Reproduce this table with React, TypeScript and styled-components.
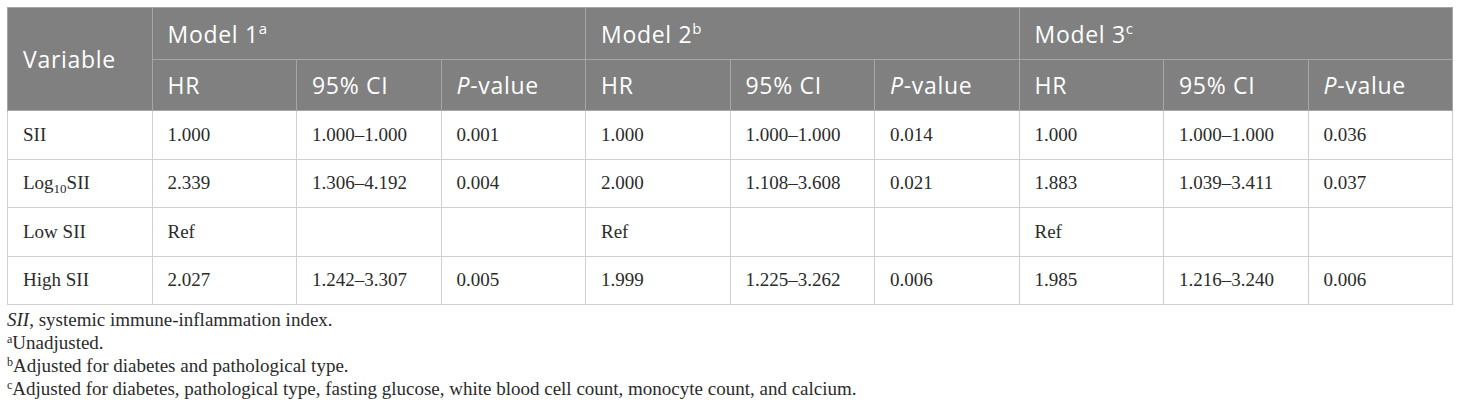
import React from "react";
import styled, { createGlobalStyle } from "styled-components";

const GlobalStyle = createGlobalStyle`
  html, body {
    margin: 0;
    padding: 0;
    background: #ffffff;
  }
  body {
    padding: 7px 8px 0 7px;
  }
`;

const Table = styled.table`
  width: 1446px;
  table-layout: fixed;
  border-collapse: collapse;
  border: 1px solid #cfcfcf;
`;

const HeadCell = styled.th<{ $h?: number }>`
  background: #808080;
  color: #ffffff;
  font-family: "Open Sans", "Liberation Sans", sans-serif;
  font-weight: 400;
  font-size: 23px;
  letter-spacing: 0.7px;
  text-align: left;
  vertical-align: middle;
  padding: 0 0 0 15px;
  height: ${(p) => p.$h ?? 51}px;
  border: 1px solid #a6a6a6;
  box-sizing: border-box;

  sup {
    font-size: 15px;
    letter-spacing: 0;
    vertical-align: 9px;
    line-height: 0;
  }
`;

const Cell = styled.td`
  font-family: "Liberation Serif", "Times New Roman", serif;
  font-size: 19px;
  color: #2b2b2b;
  height: 48.5px;
  padding: 0 0 0 15px;
  border: 1px solid #cfcfcf;
  box-sizing: border-box;
  vertical-align: middle;

  sub {
    font-size: 13px;
    vertical-align: -4px;
    line-height: 0;
  }
`;

const Notes = styled.div`
  margin-top: 3px;
  font-family: "Liberation Serif", "Times New Roman", serif;
  font-size: 19px;
  line-height: 23px;
  color: #2b2b2b;

  sup {
    font-size: 12px;
    vertical-align: 6px;
    line-height: 0;
  }
`;

type Row = { label: React.ReactNode; values: string[] };

const rows: Row[] = [
  {
    label: "SII",
    values: ["1.000", "1.000–1.000", "0.001", "1.000", "1.000–1.000", "0.014", "1.000", "1.000–1.000", "0.036"],
  },
  {
    label: (
      <>
        Log<sub>10</sub>SII
      </>
    ),
    values: ["2.339", "1.306–4.192", "0.004", "2.000", "1.108–3.608", "0.021", "1.883", "1.039–3.411", "0.037"],
  },
  {
    label: "Low SII",
    values: ["Ref", "", "", "Ref", "", "", "Ref", "", ""],
  },
  {
    label: "High SII",
    values: ["2.027", "1.242–3.307", "0.005", "1.999", "1.225–3.262", "0.006", "1.985", "1.216–3.240", "0.006"],
  },
];

const models = [
  { name: "Model 1", mark: "a" },
  { name: "Model 2", mark: "b" },
  { name: "Model 3", mark: "c" },
];

export default function App() {
  return (
    <>
      <GlobalStyle />
      <Table>
        <thead>
          <tr>
            <HeadCell rowSpan={2} $h={52}>
              Variable
            </HeadCell>
            {models.map((m) => (
              <HeadCell key={m.name} colSpan={3} $h={52}>
                {m.name}
                <sup>{m.mark}</sup>
              </HeadCell>
            ))}
          </tr>
          <tr>
            {models.map((m) => (
              <React.Fragment key={m.name}>
                <HeadCell>HR</HeadCell>
                <HeadCell>95% CI</HeadCell>
                <HeadCell>
                  <i>P</i>-value
                </HeadCell>
              </React.Fragment>
            ))}
          </tr>
        </thead>
        <tbody>
          {rows.map((r, i) => (
            <tr key={i}>
              <Cell>{r.label}</Cell>
              {r.values.map((v, j) => (
                <Cell key={j}>{v}</Cell>
              ))}
            </tr>
          ))}
        </tbody>
      </Table>
      <Notes>
        <div>
          <i>SII</i>, systemic immune-inflammation index.
        </div>
        <div>
          <sup>a</sup>Unadjusted.
        </div>
        <div>
          <sup>b</sup>Adjusted for diabetes and pathological type.
        </div>
        <div>
          <sup>c</sup>Adjusted for diabetes, pathological type, fasting glucose, white blood cell count, monocyte count, and calcium.
        </div>
      </Notes>
    </>
  );
}
